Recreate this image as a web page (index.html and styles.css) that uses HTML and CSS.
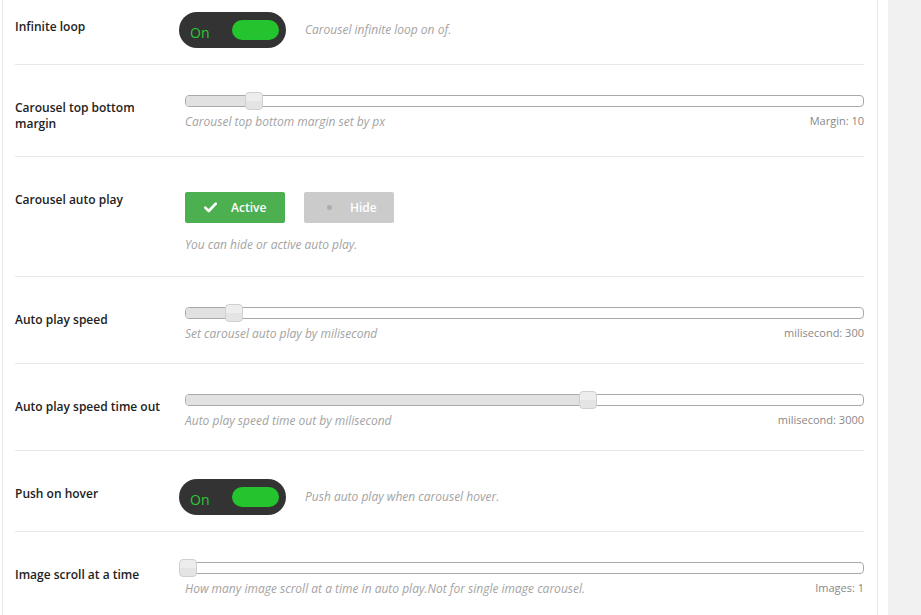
FILE: index.html
```html
<!DOCTYPE html>
<html lang="en">
<head>
<meta charset="utf-8">
<title>Carousel settings</title>
<link rel="stylesheet" href="styles.css">
</head>
<body>
<div class="page">
  <main class="main">
    <section class="panel">
      <div class="rows">
        <div class="row row--toggle">
          <div class="label">Infinite loop</div>
          <div class="control control--inline">
            <div class="toggle"><span class="toggle-text">On</span><span class="toggle-knob"></span></div>
            <p class="desc">Carousel infinite loop on of.</p>
          </div>
        </div>

        <div class="row">
          <div class="label">Carousel top bottom margin</div>
          <div class="control">
            <div class="slider"><div class="track"><div class="fill" style="width:9.75%"></div><div class="handle" style="left:9.75%"></div></div></div>
            <div class="meta"><p class="desc">Carousel top bottom margin set by px</p><span class="value">Margin: 10</span></div>
          </div>
        </div>

        <div class="row row--buttons">
          <div class="label">Carousel auto play</div>
          <div class="control control--buttons">
            <div class="btn-group">
              <button class="btn btn--active" type="button">
                <svg class="btn-icon" width="13" height="11" viewBox="0 0 13 11" aria-hidden="true"><path d="M1.3 5.6 L4.8 9 L11.8 1.6" fill="none" stroke="#fff" stroke-width="2.6" stroke-linecap="round" stroke-linejoin="round"/></svg>
                <span>Active</span>
              </button>
              <button class="btn btn--hide" type="button">
                <span class="btn-dot"></span>
                <span>Hide</span>
              </button>
            </div>
            <p class="desc desc--block">You can hide or active auto play.</p>
          </div>
        </div>

        <div class="row">
          <div class="label">Auto play speed</div>
          <div class="control">
            <div class="slider"><div class="track"><div class="fill" style="width:6.8%"></div><div class="handle" style="left:6.8%"></div></div></div>
            <div class="meta"><p class="desc">Set carousel auto play by milisecond</p><span class="value">milisecond: 300</span></div>
          </div>
        </div>

        <div class="row">
          <div class="label">Auto play speed time out</div>
          <div class="control">
            <div class="slider"><div class="track"><div class="fill" style="width:59.1%"></div><div class="handle" style="left:59.1%"></div></div></div>
            <div class="meta"><p class="desc">Auto play speed time out by milisecond</p><span class="value">milisecond: 3000</span></div>
          </div>
        </div>

        <div class="row row--toggle">
          <div class="label">Push on hover</div>
          <div class="control control--inline">
            <div class="toggle"><span class="toggle-text">On</span><span class="toggle-knob"></span></div>
            <p class="desc">Push auto play when carousel hover.</p>
          </div>
        </div>

        <div class="row">
          <div class="label">Image scroll at a time</div>
          <div class="control">
            <div class="slider"><div class="track"><div class="fill" style="width:0%"></div><div class="handle" style="left:0%"></div></div></div>
            <div class="meta"><p class="desc">How many image scroll at a time in auto play.Not for single image carousel.</p><span class="value">Images: 1</span></div>
          </div>
        </div>
      </div>
    </section>
  </main>
  <aside class="sidebar"></aside>
</div>
</body>
</html>
```

FILE: styles.css
```css
* { box-sizing: border-box; }

html, body {
  margin: 0;
  padding: 0;
  height: 100%;
  overflow: hidden;
  background: #fff;
  font-family: "Open Sans", "Noto Sans", "DejaVu Sans", sans-serif;
  color: #222;
}

.page {
  display: flex;
  height: 615px;
}

.main {
  width: 888px;
  flex: none;
  padding-right: 10px;
  background: #fff;
}

.sidebar {
  flex: 1;
  background: #f1f1f1;
}

.panel {
  margin-left: 2px;
  height: 100%;
  border-left: 1px solid #e8e8e8;
  border-right: 1px solid #e6e6e6;
  padding: 0 13px 0 12px;
  overflow: hidden;
}

.rows {
  margin-top: -16px;
}

.row {
  display: grid;
  grid-template-columns: 150px 1fr;
  column-gap: 20px;
  padding: 27px 0 20px;
  border-bottom: 1px solid #e8e8e8;
}

.row--toggle { padding-bottom: 16px; }
.row--buttons { padding-bottom: 22px; }

.label {
  font-size: 12px;
  font-weight: 600;
  line-height: 16px;
  color: #222;
  padding: 8px 0 4px;
}

.control { min-width: 0; }

.control--inline {
  display: flex;
  align-items: center;
  padding-top: 1px;
}

.control--buttons { padding-top: 8px; }

.desc {
  margin: 0;
  font-size: 12px;
  font-style: italic;
  line-height: 18px;
  color: #a3a3a3;
}

.desc--block { margin-top: 13px; }

/* toggle */
.toggle {
  width: 107px;
  height: 36px;
  margin-left: -6px;
  margin-right: 19px;
  flex: none;
  border-radius: 18px;
  background: #333;
  display: flex;
  align-items: center;
  justify-content: space-between;
  padding: 0 7px 0 11px;
}

.toggle-text {
  font-size: 14px;
  color: #2cc836;
  margin-top: 5px;
}

.toggle-knob {
  width: 47px;
  height: 20px;
  border-radius: 10px;
  background: #24c42e;
}

/* slider */
.slider {
  height: 18px;
  padding-top: 3px;
}

.track {
  position: relative;
  height: 12px;
  border: 1px solid #a9a9a9;
  border-radius: 4px;
  background: #fff;
}

.fill {
  position: absolute;
  left: 0;
  top: 0;
  bottom: 0;
  background: #e1e1e1;
  border-radius: 3px 0 0 3px;
}

.handle {
  position: absolute;
  top: -4px;
  width: 18px;
  height: 18px;
  margin-left: -7px;
  border: 1px solid #d0d0d0;
  border-radius: 4px;
  background: linear-gradient(#ededed 50%, #e4e4e4 50%);
}

.meta {
  display: flex;
  justify-content: space-between;
  align-items: flex-start;
  margin-top: 3px;
}

.value {
  font-size: 11px;
  line-height: 15px;
  color: #888;
  white-space: nowrap;
}

/* buttons */
.btn-group {
  display: flex;
  gap: 19px;
}

.btn {
  height: 31px;
  border: 0;
  border-radius: 2px;
  display: flex;
  align-items: center;
  font-family: inherit;
  font-size: 12px;
  font-weight: 600;
  color: #fff;
  padding: 0;
}

.btn--active {
  width: 100px;
  background: #4caf50;
  padding-left: 19px;
  gap: 14px;
}

.btn--hide {
  width: 90px;
  background: #cbcbcb;
  padding-left: 23px;
  gap: 18px;
}

.btn-dot {
  width: 5px;
  height: 5px;
  border-radius: 50%;
  background: #adadad;
}
```
